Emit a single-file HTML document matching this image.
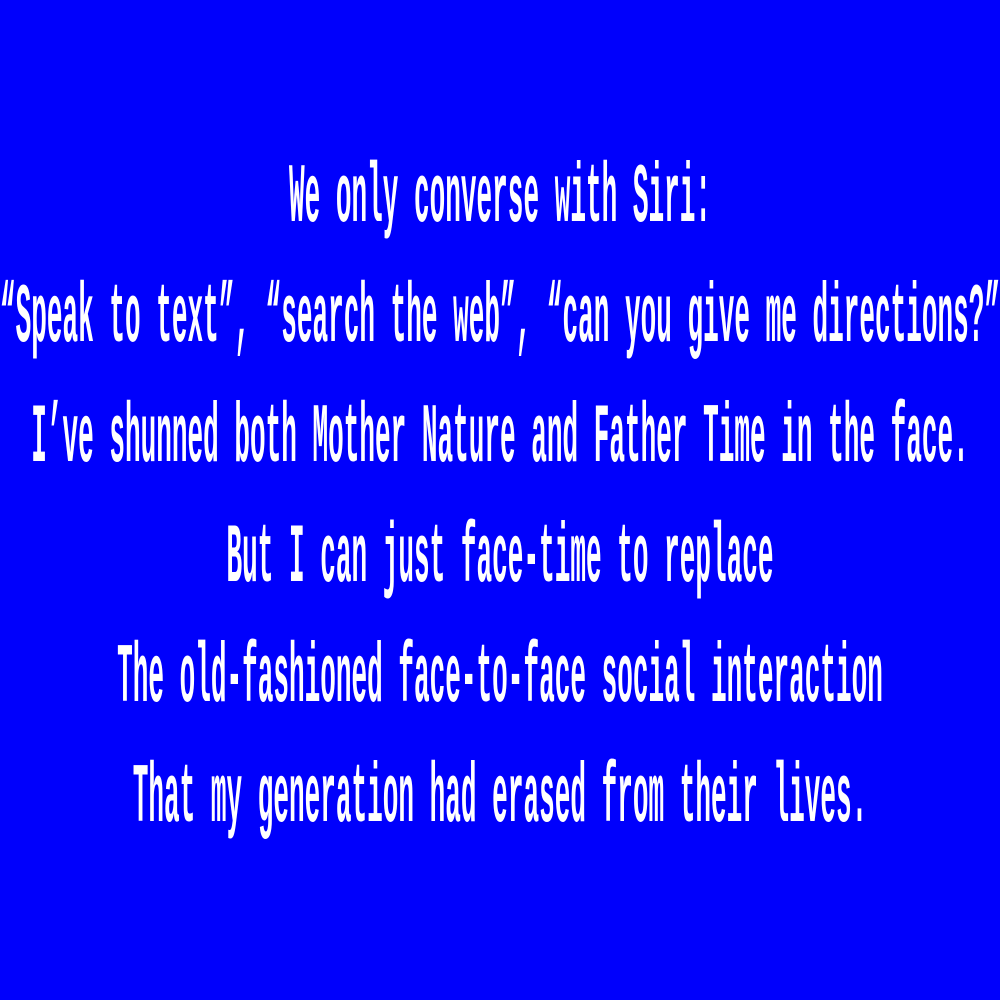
<!DOCTYPE html>
<html><head><style>
html,body{margin:0;padding:0;width:1000px;height:1000px;background:#0000fc;overflow:hidden}
.l{position:absolute;left:500px;white-space:nowrap;color:#fff;font-family:"Liberation Mono",monospace;font-size:84px;line-height:84px;transform:translateX(-50%) scaleX(.31);transform-origin:center;font-weight:bold}
</style></head><body>
<div class="l" style="top:158px">We only converse with Siri:</div>
<div class="l" style="top:278px">“Speak to text”, “search the web”, “can you give me directions?”</div>
<div class="l" style="top:398px">I’ve shunned both Mother Nature and Father Time in the face.</div>
<div class="l" style="top:518px">But I can just face-time to replace</div>
<div class="l" style="top:638px">The old-fashioned face-to-face social interaction</div>
<div class="l" style="top:758px">That my generation had erased from their lives.</div>
</body></html>
